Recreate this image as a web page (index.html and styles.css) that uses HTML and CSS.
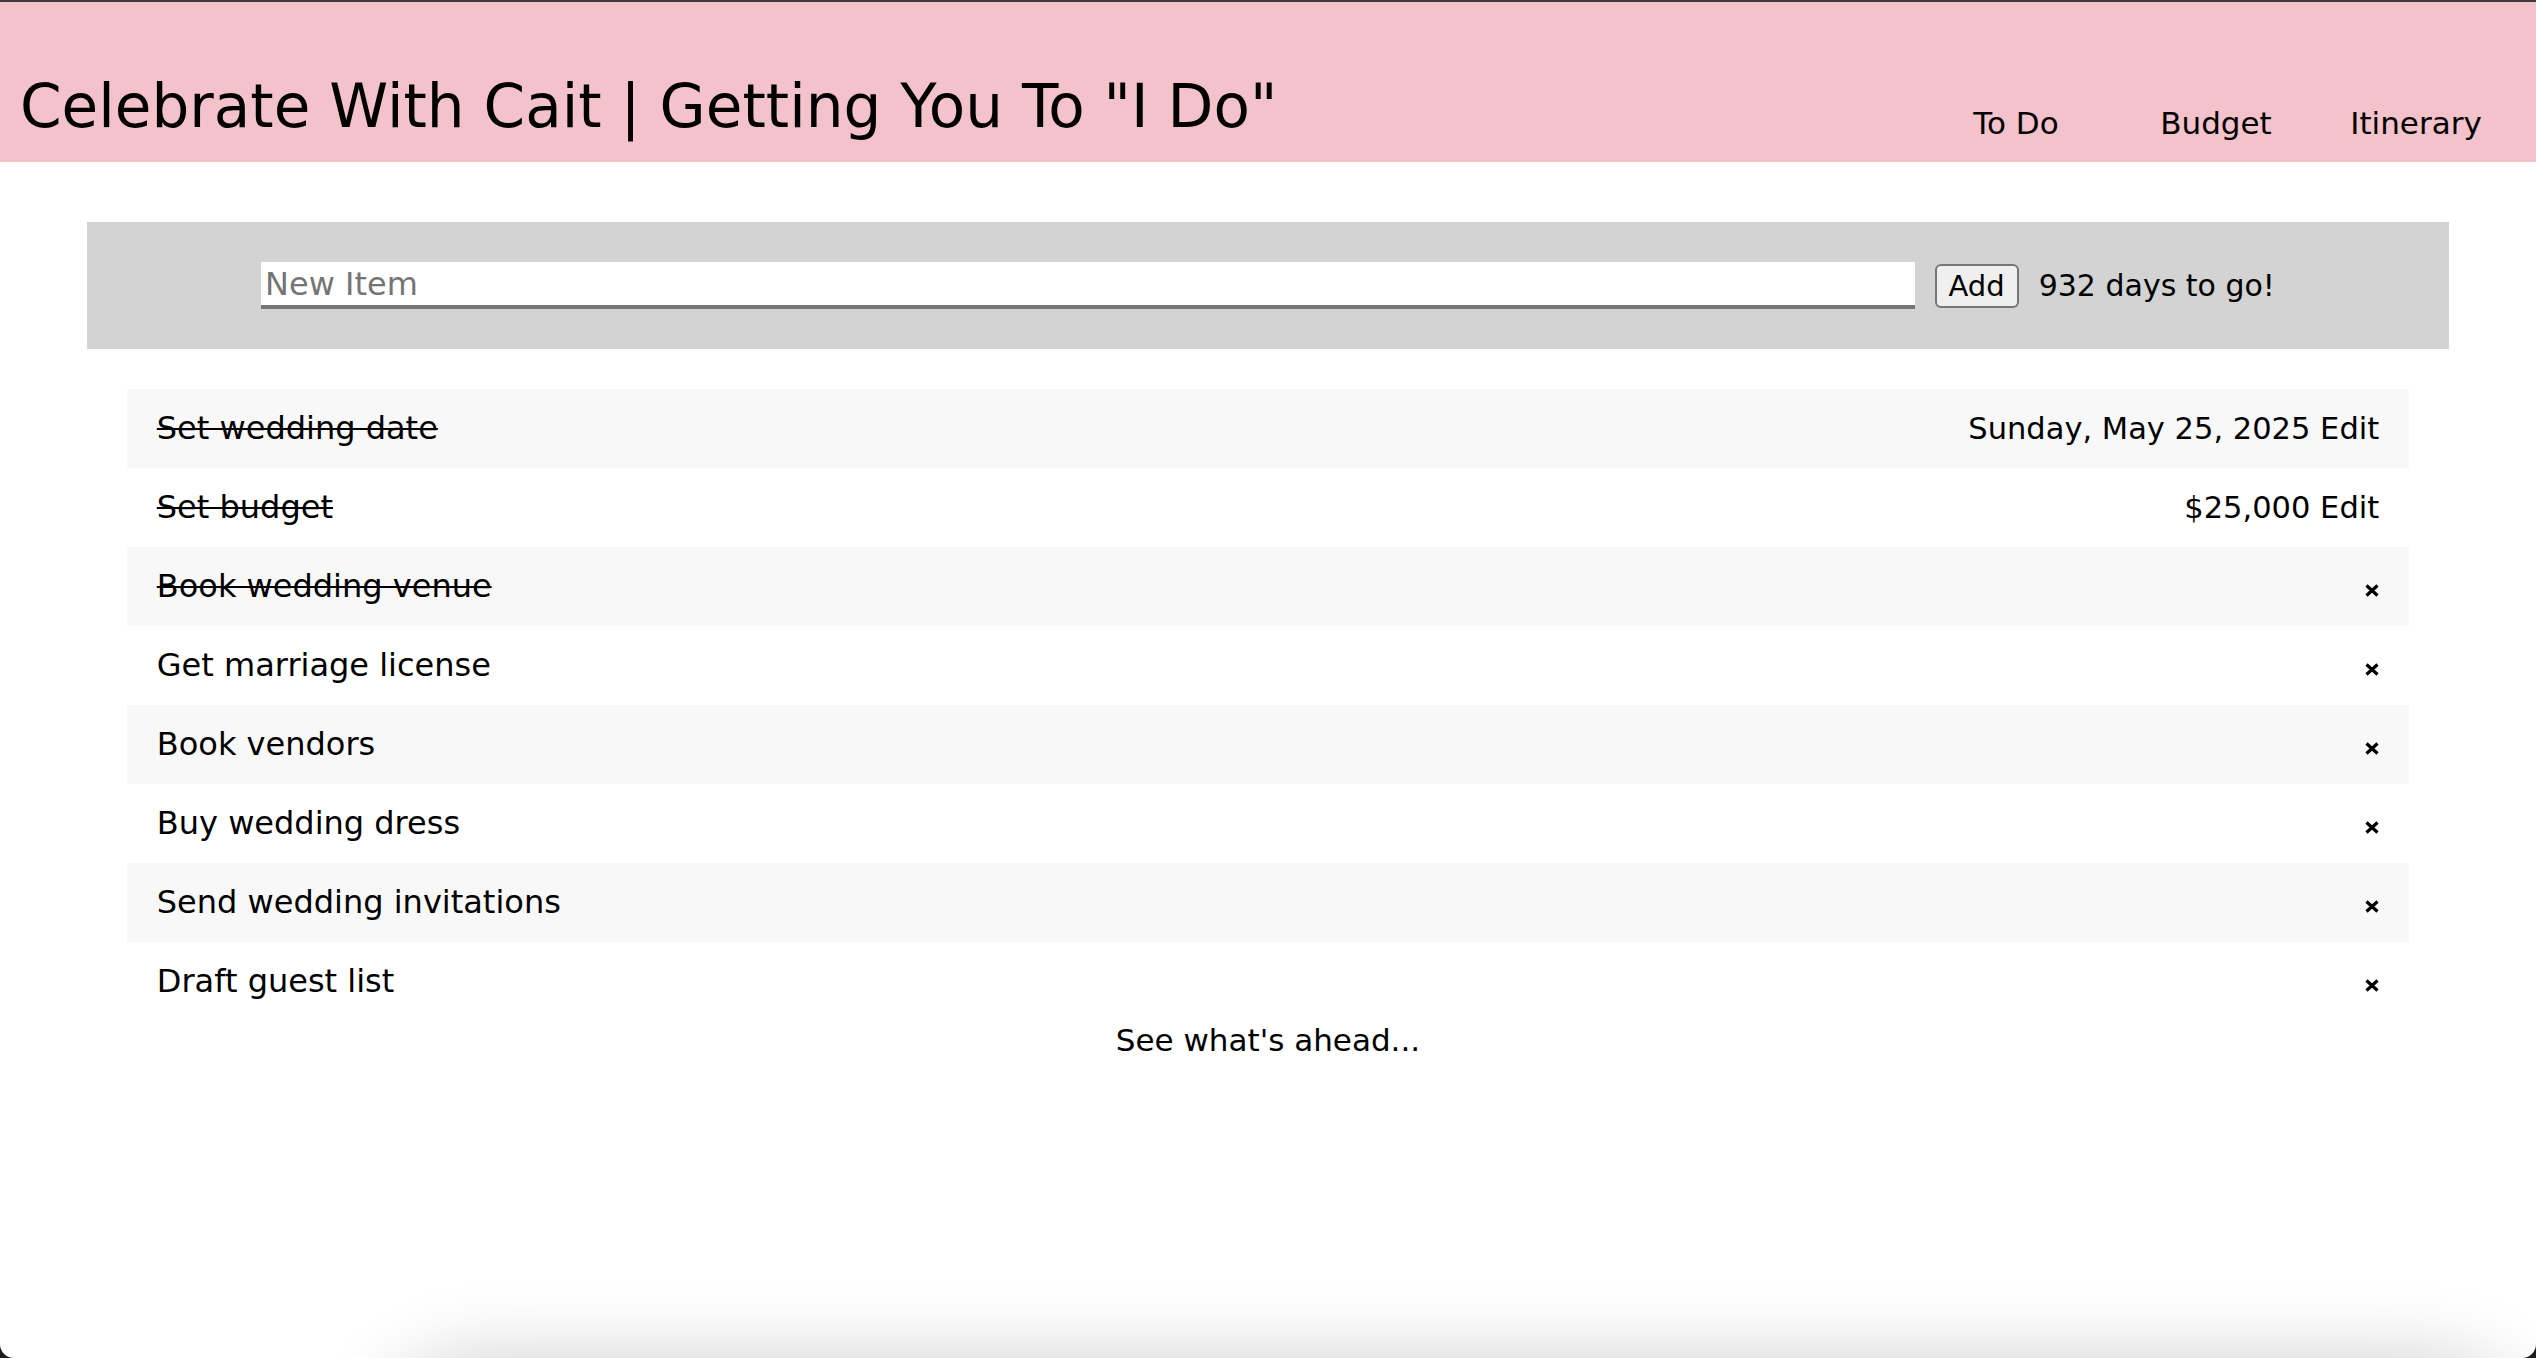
FILE: index.html
```html
<!DOCTYPE html>
<html lang="en">
<head>
<meta charset="utf-8">
<title>Celebrate With Cait</title>
<link rel="stylesheet" href="styles.css">
</head>
<body>
<div class="frame">
  <header class="site-header">
    <h1 class="title">Celebrate With Cait | Getting You To "I Do"</h1>
    <nav class="nav">
      <a class="nav-link" href="#">To Do</a>
      <a class="nav-link" href="#">Budget</a>
      <a class="nav-link" href="#">Itinerary</a>
    </nav>
  </header>
  <main class="main">
    <section class="entry">
      <input class="new-item" type="text" placeholder="New Item">
      <button class="add-btn" type="button">Add</button>
      <span class="countdown">932 days to go!</span>
    </section>
    <ul class="list">
      <li class="item"><span class="label done">Set wedding date</span><span class="meta">Sunday, May 25, 2025 Edit</span></li>
      <li class="item"><span class="label done">Set budget</span><span class="meta">$25,000 Edit</span></li>
      <li class="item"><span class="label done">Book wedding venue</span><span class="remove"><svg class="x-icon" viewBox="0 0 14 13" width="14" height="13"><path d="M1.5 1.5 L12.5 11.5 M12.5 1.5 L1.5 11.5"/></svg></span></li>
      <li class="item"><span class="label">Get marriage license</span><span class="remove"><svg class="x-icon" viewBox="0 0 14 13" width="14" height="13"><path d="M1.5 1.5 L12.5 11.5 M12.5 1.5 L1.5 11.5"/></svg></span></li>
      <li class="item"><span class="label">Book vendors</span><span class="remove"><svg class="x-icon" viewBox="0 0 14 13" width="14" height="13"><path d="M1.5 1.5 L12.5 11.5 M12.5 1.5 L1.5 11.5"/></svg></span></li>
      <li class="item"><span class="label">Buy wedding dress</span><span class="remove"><svg class="x-icon" viewBox="0 0 14 13" width="14" height="13"><path d="M1.5 1.5 L12.5 11.5 M12.5 1.5 L1.5 11.5"/></svg></span></li>
      <li class="item"><span class="label">Send wedding invitations</span><span class="remove"><svg class="x-icon" viewBox="0 0 14 13" width="14" height="13"><path d="M1.5 1.5 L12.5 11.5 M12.5 1.5 L1.5 11.5"/></svg></span></li>
      <li class="item"><span class="label">Draft guest list</span><span class="remove"><svg class="x-icon" viewBox="0 0 14 13" width="14" height="13"><path d="M1.5 1.5 L12.5 11.5 M12.5 1.5 L1.5 11.5"/></svg></span></li>
    </ul>
    <p class="ahead">See what's ahead...</p>
  </main>
  <div class="shadow-card"></div>
</div>
</body>
</html>
```

FILE: styles.css
```css
* {
  box-sizing: border-box;
}

html {
  height: 100%;
  background: #1c1a24;
}

body {
  margin: 0;
  height: 100%;
  font-family: "DejaVu Sans", "Noto Sans", sans-serif;
  font-size: 32px;
  color: #000;
}

.frame {
  position: relative;
  height: 100vh;
  background: #fff;
  border-top: 2px solid #3b3b3b;
  border-radius: 0 0 14px 14px;
  overflow: hidden;
}

.site-header {
  height: 160px;
  background: #f4c2cb;
  display: flex;
  justify-content: space-between;
  align-items: flex-start;
  padding: 73px 20px 0 20px;
}

.title {
  margin: 0;
  font-size: 59.6px;
  font-weight: 400;
  line-height: 64px;
  white-space: nowrap;
}

.nav {
  display: flex;
  margin-top: 32px;
}

.nav-link {
  width: 200px;
  text-align: center;
  font-size: 31px;
  line-height: 32px;
  color: #000;
  text-decoration: none;
}

.main {
  padding-top: 60px;
}

.entry {
  margin: 0 87px;
  height: 127px;
  background: #d3d3d3;
  display: flex;
  align-items: center;
  justify-content: center;
  gap: 20px;
}

.new-item {
  width: 70%;
  height: 47px;
  border: none;
  border-bottom: 4px solid #767676;
  background: #fff;
  padding: 0 4px;
  font-family: "DejaVu Sans", sans-serif;
  font-size: 32px;
  color: #000;
  outline: none;
}

.new-item::placeholder {
  color: #757575;
}

.add-btn {
  height: 44px;
  padding: 0 12px;
  background: #efefef;
  border: 2px solid #767676;
  border-radius: 6px;
  font-family: "DejaVu Sans", sans-serif;
  font-size: 29px;
  color: #000;
}

.countdown {
  font-size: 30px;
  white-space: nowrap;
}

.list {
  list-style: none;
  width: 90%;
  margin: 40px auto 0;
  padding: 0;
}

.item {
  height: 79px;
  display: flex;
  justify-content: space-between;
  align-items: baseline;
  padding: 0 30px;
  line-height: 79px;
}

.item:nth-child(odd) {
  background: #f8f8f8;
}

.label.done {
  text-decoration: line-through;
  text-decoration-thickness: 2px;
}

.meta {
  white-space: nowrap;
  font-size: 30.5px;
}

.remove {
  display: inline-flex;
  align-items: flex-end;
  line-height: 1;
}

.x-icon {
  display: block;
  fill: none;
  stroke: #000;
  stroke-width: 3.2;
}

.ahead {
  margin: 0;
  text-align: center;
  line-height: 38px;
  font-size: 31px;
}

.shadow-card {
  position: absolute;
  left: 410px;
  right: 40px;
  top: 1400px;
  height: 200px;
  border-radius: 70px;
  background: #fff;
  box-shadow: 0 -6px 80px 36px rgba(0, 0, 0, 0.2);
}
```
